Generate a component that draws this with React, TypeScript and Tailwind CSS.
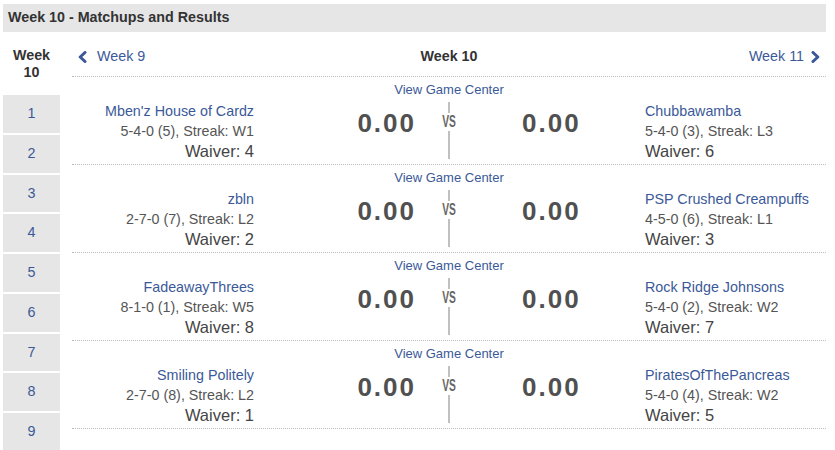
const BLUE = "text-[#3b5998]";

type Team = { name: string; record: string; waiver: number };

const matchups: { home: Team; away: Team }[] = [
  {
    home: { name: "Mben'z House of Cardz", record: "5-4-0 (5), Streak: W1", waiver: 4 },
    away: { name: "Chubbawamba", record: "5-4-0 (3), Streak: L3", waiver: 6 },
  },
  {
    home: { name: "zbln", record: "2-7-0 (7), Streak: L2", waiver: 2 },
    away: { name: "PSP Crushed Creampuffs", record: "4-5-0 (6), Streak: L1", waiver: 3 },
  },
  {
    home: { name: "FadeawayThrees", record: "8-1-0 (1), Streak: W5", waiver: 8 },
    away: { name: "Rock Ridge Johnsons", record: "5-4-0 (2), Streak: W2", waiver: 7 },
  },
  {
    home: { name: "Smiling Politely", record: "2-7-0 (8), Streak: L2", waiver: 1 },
    away: { name: "PiratesOfThePancreas", record: "5-4-0 (4), Streak: W2", waiver: 5 },
  },
];

function Chevron({ dir }: { dir: "left" | "right" }) {
  return (
    <svg width="9" height="12" viewBox="0 0 9 12" fill="none" stroke="#3b5998" strokeWidth="3" strokeLinecap="round" strokeLinejoin="round">
      <path d={dir === "left" ? "M7 1.5L2.2 6l4.8 4.5" : "M2 1.5L6.8 6l-4.8 4.5"} />
    </svg>
  );
}

function TeamInfo({ team, align }: { team: Team; align: "left" | "right" }) {
  return (
    <div className={align === "right" ? "text-right" : "text-left"}>
      <div className={`text-[14.3px] leading-[20px] ${BLUE} whitespace-nowrap`}>{team.name}</div>
      <div className="text-[14.3px] leading-[20px] text-[#555] whitespace-nowrap">{team.record}</div>
      <div className="text-[16.5px] leading-[20px] text-[#444] whitespace-nowrap">Waiver: {team.waiver}</div>
    </div>
  );
}

export default function App() {
  return (
    <div className="font-['Liberation_Sans',Arial,sans-serif] bg-white pl-[3px] pt-[4px] w-[835px] h-[450px] overflow-hidden">
      <div className="w-[823px] h-[28px] bg-[#e6e6e6] pl-[5px] text-[14.3px] leading-[26px] font-bold text-[#333]">
        Week 10 - Matchups and Results
      </div>

      <div className="flex w-[823px]">
        {/* week picker */}
        <div className="w-[57px] pt-[15px] shrink-0">
          <div className="text-center text-[14.3px] leading-[17px] font-bold text-[#333]">
            Week
            <br />
            10
          </div>
          <div className="mt-[14px] flex flex-col">
            {Array.from({ length: 9 }).map((_, i) => (
              <div key={i} className={`h-[37.75px] mb-[2px] bg-[#e6e6e6] flex items-center justify-center text-[14.3px] ${BLUE}`}>
                {i + 1}
              </div>
            ))}
          </div>
        </div>

        {/* matchups */}
        <div className="ml-[12px] w-[754px]">
          <div className="flex items-center justify-between pt-[16px] pb-[11px] leading-[17px] text-[14.3px] border-b border-dotted border-[#bbb]">
            <div className={`flex items-center gap-[10px] pl-[6px] ${BLUE}`}>
              <Chevron dir="left" />
              <span>Week 9</span>
            </div>
            <div className="font-bold text-[#333] pl-[4px]">Week 10</div>
            <div className={`flex items-center gap-[7px] pr-[6px] ${BLUE}`}>
              <span>Week 11</span>
              <Chevron dir="right" />
            </div>
          </div>

          {matchups.map((m, i) => (
            <div key={i} className="h-[88px] box-border border-b border-dotted border-[#bbb] pt-[6px]">
              <div className={`text-center text-[13px] leading-[14px] ${BLUE}`}>View Game Center</div>
              <div className="flex mt-[4px]">
                <div className="w-[182px]">
                  <TeamInfo team={m.home} align="right" />
                </div>
                <div className="w-[185px] text-right pr-[23px] pt-[7px] text-[26px] leading-[30px] font-bold tracking-[2px] text-[#505050]">
                  0.00
                </div>
                <div className="w-[20px] flex flex-col items-center">
                  <div className="mt-[1px] w-[2px] h-[11px] bg-[#c0c0c0]" />
                  <div className="h-[16px] text-[16.5px] leading-[16px] font-bold text-[#666] scale-x-[0.62]">VS</div>
                  <div className="mt-[2px] w-[2px] h-[28px] bg-[#c0c0c0]" />
                </div>
                <div className="w-[186px] pl-[63px] pt-[7px] text-[26px] leading-[30px] font-bold tracking-[2px] text-[#505050]">
                  0.00
                </div>
                <div className="flex-1">
                  <TeamInfo team={m.away} align="left" />
                </div>
              </div>
            </div>
          ))}
        </div>
      </div>
    </div>
  );
}
